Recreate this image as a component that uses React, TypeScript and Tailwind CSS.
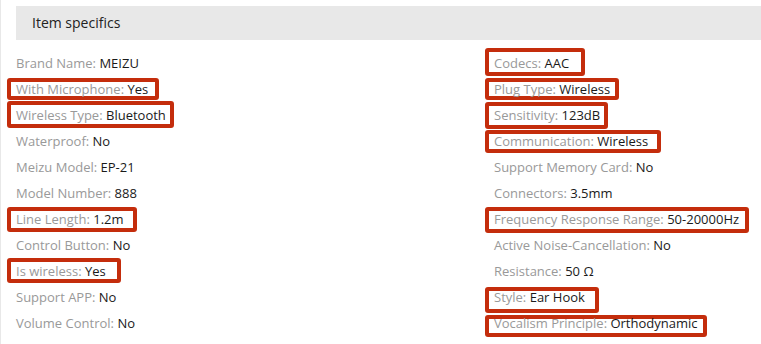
import React from "react";

type Spec = {
  label: string;
  value: string;
  // highlight box around the row, relative to the row's top-left
  mark?: { l: number; t: number; w: number; h: number };
};

const left: Spec[] = [
  { label: "Brand Name", value: "MEIZU" },
  { label: "With Microphone", value: "Yes", mark: { l: -9, t: 2, w: 152, h: 22 } },
  { label: "Wireless Type", value: "Bluetooth", mark: { l: -9, t: -1, w: 167, h: 27 } },
  { label: "Waterproof", value: "No" },
  { label: "Meizu Model", value: "EP-21" },
  { label: "Model Number", value: "888" },
  { label: "Line Length", value: "1.2m", mark: { l: -9, t: 1, w: 130, h: 25 } },
  { label: "Control Button", value: "No" },
  { label: "Is wireless", value: "Yes", mark: { l: -9, t: 0, w: 114, h: 25 } },
  { label: "Support APP", value: "No" },
  { label: "Volume Control", value: "No" },
];

const right: Spec[] = [
  { label: "Codecs", value: "AAC", mark: { l: -9, t: -2, w: 100, h: 28 } },
  { label: "Plug Type", value: "Wireless", mark: { l: -9, t: 2, w: 134, h: 22 } },
  { label: "Sensitivity", value: "123dB", mark: { l: -9, t: 0, w: 123, h: 27 } },
  { label: "Communication", value: "Wireless", mark: { l: -9, t: 2, w: 176, h: 23 } },
  { label: "Support Memory Card", value: "No" },
  { label: "Connectors", value: "3.5mm" },
  { label: "Frequency Response Range", value: "50-20000Hz", mark: { l: -9, t: 1, w: 264, h: 26 } },
  { label: "Active Noise-Cancellation", value: "No" },
  { label: "Resistance", value: "50 Ω" },
  { label: "Style", value: "Ear Hook", mark: { l: -9, t: 3, w: 114, h: 26 } },
  { label: "Vocalism Principle", value: "Orthodynamic", mark: { l: -9, t: 5, w: 222, h: 22 } },
];

function SpecRow({ s }: { s: Spec }) {
  return (
    <li className="relative h-[26px] leading-[26px] whitespace-nowrap">
      {s.mark && (
        <span
          className="absolute rounded-[3px] border-[4px] border-[#c42d0c] bg-white"
          style={{ left: s.mark.l, top: s.mark.t, width: s.mark.w, height: s.mark.h }}
        />
      )}
      <span className="relative">
        <span className="text-[#999999]">{s.label}:</span>{" "}
        <span className="text-[#1a1a1a]">{s.value}</span>
      </span>
    </li>
  );
}

export default function App() {
  return (
    <div
      className="h-[344px] w-[761px] overflow-hidden bg-white border-l border-[#e8e8e8]"
      style={{ fontFamily: '"Open Sans", "Noto Sans", sans-serif' }}
    >
      <div className="ml-[15px] mt-[6px] h-[34px] w-[800px] bg-[#e8e8e8] pl-[16px] text-[14px] leading-[34px] text-[#222]">
        Item specifics
      </div>
      <div className="ml-[15px] mt-[10px] grid grid-cols-[478px_1fr] text-[13px]">
        <ul>
          {left.map((s) => (
            <SpecRow key={s.label} s={s} />
          ))}
        </ul>
        <ul>
          {right.map((s) => (
            <SpecRow key={s.label} s={s} />
          ))}
        </ul>
      </div>
    </div>
  );
}
